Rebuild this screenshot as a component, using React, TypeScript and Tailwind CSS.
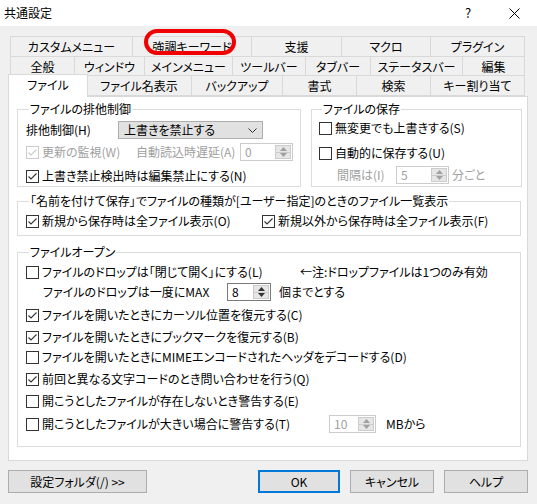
import React from "react";

// Tab rows (multi-row Windows tab control), widths taken from the screenshot
const row1 = [
  { label: "カスタムメニュー", w: "w-[123px]" },
  { label: "強調キーワード", w: "w-[120px]" },
  { label: "支援", w: "w-[91px]" },
  { label: "マクロ", w: "w-[90px]" },
  { label: "プラグイン", w: "w-[95px]" },
];

const row2 = [
  { label: "全般", w: "w-[65px]" },
  { label: "ウィンドウ", w: "w-[71px]" },
  { label: "メインメニュー", w: "w-[89px]" },
  { label: "ツールバー", w: "w-[74px]" },
  { label: "タブバー", w: "w-[66px]" },
  { label: "ステータスバー", w: "w-[93px]" },
  { label: "編集", w: "w-[63px]" },
];

const row3 = [
  { label: "ファイル名表示", w: "w-[106px]" },
  { label: "バックアップ", w: "w-[92px]" },
  { label: "書式", w: "w-[75px]" },
  { label: "検索", w: "w-[75px]" },
  { label: "キー割り当て", w: "w-[95px]" },
];

function Tab({ label, w }: { label: string; w: string }) {
  return (
    <div
      className={`${w} h-[21px] -mr-px shrink-0 flex items-center justify-center border border-[#d9d9d9] bg-[#f0f0f0]`}
    >
      {label}
    </div>
  );
}

function Check({ checked, disabled }: { checked?: boolean; disabled?: boolean }) {
  const c = disabled ? "#cccccc" : "#333333";
  return (
    <span
      className={`w-[13px] h-[13px] shrink-0 border bg-white flex items-center justify-center ${
        disabled ? "border-[#cccccc]" : "border-[#333333]"
      }`}
    >
      {checked && (
        <svg width="11" height="11" viewBox="0 0 11 11">
          <path d="M1.5 5.5 L4 8 L9.5 2.5" fill="none" stroke={c} strokeWidth="1.1" />
        </svg>
      )}
    </span>
  );
}

function CheckRow({
  label,
  checked,
  disabled,
  className = "",
}: {
  label: string;
  checked?: boolean;
  disabled?: boolean;
  className?: string;
}) {
  return (
    <div className={`flex items-center gap-[3px] ${disabled ? "text-[#a0a0a0]" : ""} ${className}`}>
      <Check checked={checked} disabled={disabled} />
      <span className="whitespace-nowrap">{label}</span>
    </div>
  );
}

function Spin({ value, w, disabled }: { value: string; w: string; disabled?: boolean }) {
  const arrow = disabled ? "#a0a0a0" : "#333333";
  return (
    <div
      className={`${w} h-[18px] shrink-0 flex border bg-white ${
        disabled ? "border-[#cccccc] text-[#a0a0a0]" : "border-[#7a7a7a] text-black"
      }`}
    >
      <span className="flex-1 pl-[4px] leading-[16px]">{value}</span>
      <span className="w-[16px] my-[1px] mr-[1px] flex flex-col border border-[#cccccc] bg-[#e6e6e6]">
        <span className="flex-1 flex items-center justify-center border-b border-[#cccccc]">
          <svg width="7" height="4" viewBox="0 0 7 4">
            <path d="M0 4 L3.5 0 L7 4 Z" fill={arrow} />
          </svg>
        </span>
        <span className="flex-1 flex items-center justify-center">
          <svg width="7" height="4" viewBox="0 0 7 4">
            <path d="M0 0 L3.5 4 L7 0 Z" fill={arrow} />
          </svg>
        </span>
      </span>
    </div>
  );
}

function Group({
  title,
  className = "",
  children,
}: {
  title: string;
  className?: string;
  children: React.ReactNode;
}) {
  return (
    <fieldset className={`border border-[#dcdcdc] min-w-0 ${className}`}>
      <legend className="ml-[3px] px-[1px] leading-[14px] whitespace-nowrap">{title}</legend>
      {children}
    </fieldset>
  );
}

function Button({ label, w, primary }: { label: string; w: string; primary?: boolean }) {
  return (
    <div
      className={`${w} h-[23px] flex items-center justify-center bg-[#e1e1e1] ${
        primary ? "border-2 border-[#0078d7]" : "border border-[#adadad]"
      }`}
    >
      {label}
    </div>
  );
}

export default function App() {
  return (
    <div className="relative w-[537px] h-[504px] overflow-hidden bg-[#f0f0f0] text-[12px] leading-[14px] text-black font-['Noto_Sans_CJK_JP','Noto_Sans',sans-serif] [font-feature-settings:'palt']">
      {/* Title bar */}
      <div className="h-[26px] bg-white flex items-center justify-between pl-[4px]">
        <span>共通設定</span>
        <div className="flex h-full">
          <div className="w-[46px] flex items-center justify-center text-[13px]">?</div>
          <div className="w-[46px] flex items-center justify-center">
            <svg width="11" height="11" viewBox="0 0 11 11">
              <path d="M0.5 0.5 L10.5 10.5 M10.5 0.5 L0.5 10.5" stroke="#000" strokeWidth="1" />
            </svg>
          </div>
        </div>
      </div>

      {/* Tabs */}
      <div className="mt-[10px]">
        <div className="flex items-start pl-[10px] h-[20px]">
          {row1.map((t) => (
            <Tab key={t.label} {...t} />
          ))}
        </div>
        <div className="flex items-start pl-[10px] h-[20px]">
          {row2.map((t) => (
            <Tab key={t.label} {...t} />
          ))}
        </div>
        <div className="flex items-end pl-[10px] h-[20px]">
          <div className="relative z-10 w-[80px] h-[23px] -ml-[2px] -mr-[2px] -mb-px shrink-0 flex items-center justify-center pb-[2px] border border-b-0 border-[#d9d9d9] bg-white">
            ファイル
          </div>
          {row3.map((t) => (
            <Tab key={t.label} {...t} />
          ))}
        </div>
      </div>

      {/* Tab page */}
      <div className="mx-[8px] w-[520px] h-[365px] border border-[#d9d9d9] bg-white pt-[5px] pl-[8px]">
        <div className="flex gap-[10px]">
          <Group title="ファイルの排他制御" className="w-[284px] h-[85px] pl-[8px]">
            <div className="mt-[4px] h-[20px] flex items-center">
              <span className="w-[92px]">排他制御(H)</span>
              <div className="w-[145px] h-[18px] flex items-center justify-between pl-[5px] pr-[5px] border border-[#adadad] bg-[#e1e1e1]">
                <span>上書きを禁止する</span>
                <svg width="9" height="5" viewBox="0 0 9 5">
                  <path d="M0.5 0.5 L4.5 4.5 L8.5 0.5" fill="none" stroke="#333" strokeWidth="1" />
                </svg>
              </div>
            </div>
            <div className="mt-[2px] h-[20px] flex items-center">
              <CheckRow label="更新の監視(W)" checked disabled className="w-[110px]" />
              <span className="w-[104px] text-[#a0a0a0]">自動読込時遅延(A)</span>
              <Spin value="0" w="w-[53px]" disabled />
            </div>
            <div className="mt-[4px] h-[20px] flex items-center">
              <CheckRow label="上書き禁止検出時は編集禁止にする(N)" checked />
            </div>
          </Group>

          <Group title="ファイルの保存" className="w-[211px] h-[85px] pl-[7px]">
            <div className="mt-[2px] h-[20px] flex items-center">
              <CheckRow label="無変更でも上書きする(S)" />
            </div>
            <div className="mt-[5px] h-[20px] flex items-center">
              <CheckRow label="自動的に保存する(U)" />
            </div>
            <div className="mt-[2px] h-[20px] flex items-center pl-[18px] text-[#a0a0a0]">
              <span className="w-[59px]">間隔は(I)</span>
              <Spin value="5" w="w-[53px]" disabled />
              <span className="ml-[3px]">分ごと</span>
            </div>
          </Group>
        </div>

        <Group
          title="「名前を付けて保存」でファイルの種類が[ユーザー指定]のときのファイル一覧表示"
          className="mt-[7px] w-[504px] h-[42px] pl-[8px]"
        >
          <div className="mt-[3px] h-[20px] flex items-center">
            <CheckRow label="新規から保存時は全ファイル表示(O)" checked className="w-[236px]" />
            <CheckRow label="新規以外から保存時は全ファイル表示(F)" checked />
          </div>
        </Group>

        <Group title="ファイルオープン" className="mt-[9px] w-[504px] h-[202px] pl-[8px]">
          <div className="mt-[4px] h-[18px] flex items-center">
            <CheckRow label="ファイルのドロップは「閉じて開く」にする(L)" className="w-[274px]" />
            <span>←注:ドロップファイルは1つのみ有効</span>
          </div>
          <div className="mt-[2px] h-[18px] flex items-center pl-[17px]">
            <span className="w-[184px]">ファイルのドロップは一度にMAX</span>
            <Spin value="8" w="w-[44px]" />
            <span className="ml-[8px]">個までとする</span>
          </div>
          <div className="mt-[5px] h-[18px] flex items-center">
            <CheckRow label="ファイルを開いたときにカーソル位置を復元する(C)" checked />
          </div>
          <div className="mt-[4px] h-[18px] flex items-center">
            <CheckRow label="ファイルを開いたときにブックマークを復元する(B)" checked />
          </div>
          <div className="mt-[2px] h-[18px] flex items-center">
            <CheckRow label="ファイルを開いたときにMIMEエンコードされたヘッダをデコードする(D)" />
          </div>
          <div className="mt-[4px] h-[18px] flex items-center">
            <CheckRow label="前回と異なる文字コードのとき問い合わせを行う(Q)" checked />
          </div>
          <div className="mt-[4px] h-[18px] flex items-center">
            <CheckRow label="開こうとしたファイルが存在しないとき警告する(E)" />
          </div>
          <div className="mt-[5px] h-[18px] flex items-center">
            <CheckRow label="開こうとしたファイルが大きい場合に警告する(T)" className="w-[303px]" />
            <Spin value="10" w="w-[47px]" disabled />
            <span className="ml-[10px]">MBから</span>
          </div>
        </Group>
      </div>

      {/* Bottom buttons */}
      <div className="mt-[9px] px-[8px] flex">
        <Button label="設定フォルダ(/) >>" w="w-[139px]" />
        <div className="ml-auto flex gap-[10px] mr-[1px]">
          <Button label="OK" w="w-[82px]" primary />
          <Button label="キャンセル" w="w-[84px]" />
          <Button label="ヘルプ" w="w-[84px]" />
        </div>
      </div>

      {/* Red annotation around 強調キーワード */}
      <div className="absolute left-[144px] top-[29px] w-[92px] h-[26px] border-[4px] border-[#f00000] rounded-[13px] z-20" />
    </div>
  );
}
